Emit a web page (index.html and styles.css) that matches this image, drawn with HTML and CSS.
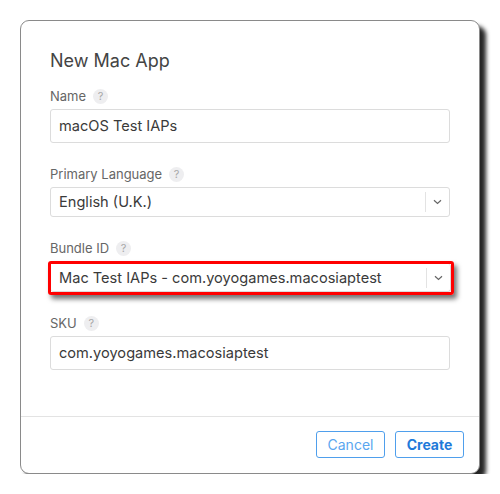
FILE: index.html
```html
<!DOCTYPE html>
<html>
<head>
<meta charset="utf-8">
<link rel="stylesheet" href="styles.css">
</head>
<body>
<div class="card">
  <div class="content">
    <h1 class="title">New Mac App</h1>
    <div class="field">
      <div class="label">Name <span class="help">?</span></div>
      <div class="input">macOS Test IAPs</div>
    </div>
    <div class="field">
      <div class="label">Primary Language <span class="help">?</span></div>
      <div class="select"><span class="value">English (U.K.)</span><span class="arrow"><svg width="9" height="6" viewBox="0 0 9 6"><path d="M1 1.2 L4.5 4.5 L8 1.2" fill="none" stroke="#666" stroke-width="1.2"/></svg></span></div>
    </div>
    <div class="field field-tight">
      <div class="label">Bundle ID <span class="help">?</span></div>
      <div class="highlight">
        <div class="select select-in"><span class="value">Mac Test IAPs - com.yoyogames.macosiaptest</span><span class="arrow"><svg width="9" height="6" viewBox="0 0 9 6"><path d="M1 1.2 L4.5 4.5 L8 1.2" fill="none" stroke="#666" stroke-width="1.2"/></svg></span></div>
      </div>
    </div>
    <div class="field">
      <div class="label">SKU <span class="help">?</span></div>
      <div class="input">com.yoyogames.macosiaptest</div>
    </div>
  </div>
  <div class="footer">
    <button class="btn btn-cancel">Cancel</button>
    <button class="btn btn-create">Create</button>
  </div>
</div>
</body>
</html>
```
FILE: styles.css
```css
html, body {
  margin: 0;
  padding: 0;
  background: #fff;
}
body {
  font-family: Inter, "Noto Sans", sans-serif;
  color: #333;
}
.card {
  box-sizing: border-box;
  margin: 20px 0 0 20px;
  width: 460px;
  height: 454px;
  border: 1px solid #8a8a8a;
  border-radius: 9px;
  background: #fff;
  box-shadow: 6px 6px 4px rgba(0, 0, 0, 0.85);
  display: flex;
  flex-direction: column;
}
.content {
  flex: 1;
  padding: 29px 29px 0 29px;
}
.title {
  margin: 0 0 16px 0;
  font-size: 18px;
  line-height: 22px;
  font-weight: 400;
  color: #444;
}
.field {
  margin-bottom: 23px;
}
.field-tight {
  margin-bottom: 20px;
}
.label {
  display: flex;
  align-items: center;
  height: 16px;
  font-size: 13px;
  color: #666;
  margin-bottom: 5px;
}
.help {
  display: inline-flex;
  align-items: center;
  justify-content: center;
  width: 15px;
  height: 15px;
  margin-left: 7px;
  border-radius: 50%;
  background: #eeeef0;
  color: #a8a8a8;
  font-size: 11px;
}
.input {
  box-sizing: border-box;
  height: 34px;
  border: 1px solid #dcdcdc;
  border-radius: 3px;
  padding: 0 8px;
  display: flex;
  align-items: center;
  font-size: 14.6px;
  color: #3a3a3a;
}
.select {
  box-sizing: border-box;
  height: 30px;
  border: 1px solid #dcdcdc;
  border-radius: 3px;
  display: flex;
  align-items: center;
  font-size: 14.6px;
  color: #3a3a3a;
}
.select .value {
  flex: 1;
  padding-left: 8px;
}
.select .arrow {
  width: 23px;
  height: 20px;
  border-left: 1px solid #e3e3e3;
  display: flex;
  align-items: center;
  justify-content: center;
}
.highlight {
  box-sizing: border-box;
  width: 406px;
  margin-left: -2px;
  border: 3px solid #ff0000;
  border-radius: 3px;
  box-shadow: 3px 4px 5px rgba(0, 0, 0, 0.55);
}
.select-in {
  height: 28px;
  border: none;
  border-right: 1px solid #dcdcdc;
  border-bottom: 1px solid #dcdcdc;
}
.footer {
  border-top: 1px solid #e3e3e3;
  padding: 14px 15px 0 0;
  height: 57px;
  box-sizing: border-box;
  display: flex;
  justify-content: flex-end;
  gap: 10px;
}
.btn {
  height: 27px;
  border: 1px solid #4f9fec;
  border-radius: 3px;
  background: #fff;
  font-family: Inter, "Noto Sans", sans-serif;
  font-size: 14px;
  padding: 0 10px;
  cursor: pointer;
}
.btn-cancel {
  width: 69px;
  color: #5aa6ef;
}
.btn-create {
  width: 69px;
  color: #1f7ad9;
  font-weight: 700;
}
```
